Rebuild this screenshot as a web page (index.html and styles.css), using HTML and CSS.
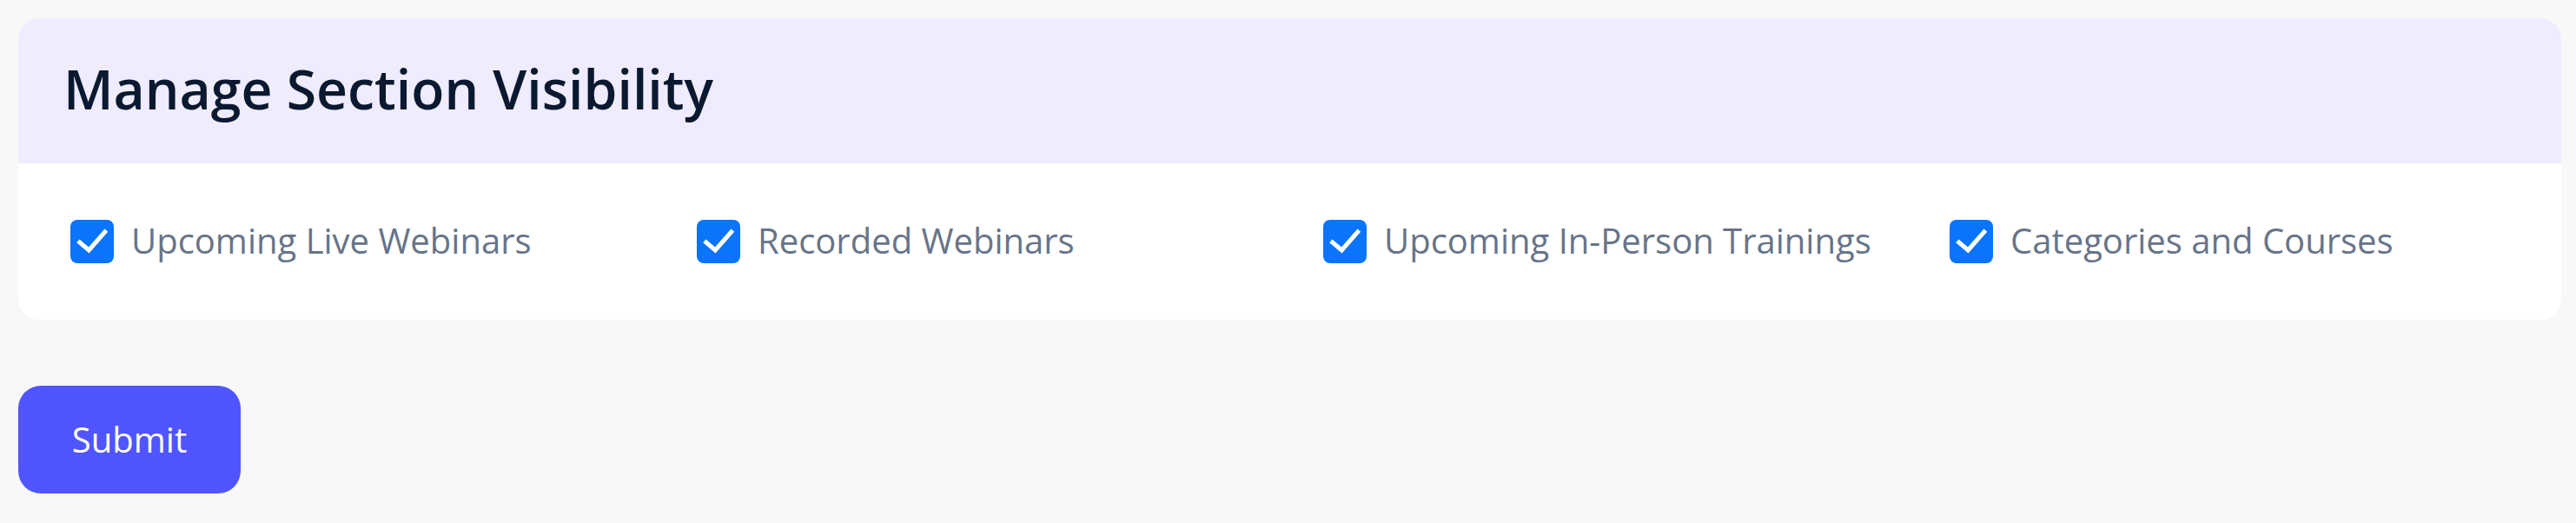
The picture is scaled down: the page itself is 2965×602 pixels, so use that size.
FILE: index.html
```html
<!DOCTYPE html>
<html lang="en">
<head>
<meta charset="utf-8">
<title>Manage Section Visibility</title>
<link rel="stylesheet" href="styles.css">
</head>
<body>
  <form class="page">
    <section class="card">
      <header class="card-header">
        <h2 class="card-title">Manage Section Visibility</h2>
      </header>
      <div class="card-body">
        <div class="options">
          <label class="option">
            <span class="check"><svg viewBox="0 0 50 50"><path d="M10.7 26 L21.3 35 L39.7 14" /></svg></span>
            <span class="option-label">Upcoming Live Webinars</span>
          </label>
          <label class="option">
            <span class="check"><svg viewBox="0 0 50 50"><path d="M10.7 26 L21.3 35 L39.7 14" /></svg></span>
            <span class="option-label">Recorded Webinars</span>
          </label>
          <label class="option">
            <span class="check"><svg viewBox="0 0 50 50"><path d="M10.7 26 L21.3 35 L39.7 14" /></svg></span>
            <span class="option-label">Upcoming In-Person Trainings</span>
          </label>
          <label class="option">
            <span class="check"><svg viewBox="0 0 50 50"><path d="M10.7 26 L21.3 35 L39.7 14" /></svg></span>
            <span class="option-label">Categories and Courses</span>
          </label>
        </div>
      </div>
    </section>
    <button type="button" class="submit">Submit</button>
  </form>
</body>
</html>
```

FILE: styles.css
```css
* { box-sizing: border-box; }

html, body {
  margin: 0;
  background: #f8f8f8;
}

body {
  font-family: "Open Sans", "Noto Sans", "Liberation Sans", sans-serif;
  overflow: hidden;
}

.page {
  padding: 21px 17px 0 21px;
  display: flex;
  flex-direction: column;
  align-items: flex-start;
}

.card {
  width: 100%;
  background: #ffffff;
  border-radius: 24px;
  overflow: hidden;
}

.card-header {
  height: 167px;
  background: #eeecfe;
  display: flex;
  align-items: center;
  padding: 0 52px 4px 52px;
}

.card-title {
  margin: 0;
  font-size: 62.5px;
  font-weight: 600;
  color: #0a192f;
  line-height: 1;
}

.card-body {
  height: 180px;
  display: flex;
  align-items: center;
  padding: 0 60px;
}

.options {
  display: grid;
  grid-template-columns: repeat(4, 721px);
  flex-shrink: 0;
}

.option {
  display: flex;
  align-items: center;
  gap: 20px;
}

.check {
  width: 50px;
  height: 50px;
  border-radius: 8px;
  background: #0b74fc;
  display: flex;
  flex-shrink: 0;
}

.check svg {
  width: 50px;
  height: 50px;
}

.check path {
  fill: none;
  stroke: #ffffff;
  stroke-width: 5;
  stroke-linecap: square;
  stroke-linejoin: miter;
}

.option-label {
  font-size: 40px;
  color: #677489;
  line-height: 1;
  padding-bottom: 2px;
}

.submit {
  margin-top: 76px;
  width: 256px;
  height: 124px;
  border: 0;
  border-radius: 26px;
  background: #5055ff;
  color: #ffffff;
  font-family: inherit;
  font-size: 40px;
  font-weight: 400;
  padding: 0 0 2px 0;
}
```
